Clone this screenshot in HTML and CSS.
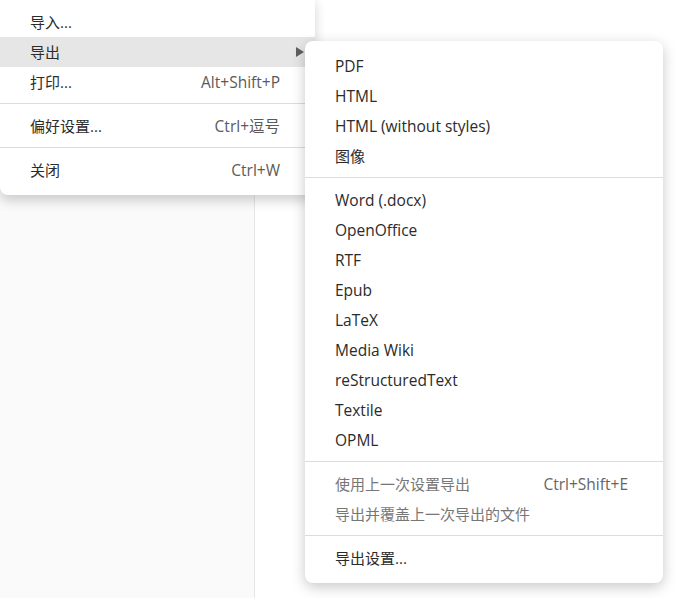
FILE: index.html
```html
<!DOCTYPE html>
<html lang="zh-CN">
<head>
<meta charset="utf-8">
<title>Export menu</title>
<link rel="stylesheet" href="styles.css">
</head>
<body>
<div class="app">
  <aside class="sidebar"></aside>
  <main class="editor"></main>
</div>

<div class="menu menu-main">
  <div class="item"><span class="label zh">导入...</span></div>
  <div class="item active"><span class="label zh">导出</span><span class="arrow"></span></div>
  <div class="item"><span class="label zh">打印...</span><span class="key">Alt+Shift+P</span></div>
  <div class="sep"></div>
  <div class="item"><span class="label zh">偏好设置...</span><span class="key">Ctrl+逗号</span></div>
  <div class="sep"></div>
  <div class="item"><span class="label zh">关闭</span><span class="key">Ctrl+W</span></div>
</div>

<div class="menu menu-sub">
  <div class="item"><span class="label">PDF</span></div>
  <div class="item"><span class="label">HTML</span></div>
  <div class="item"><span class="label">HTML (without styles)</span></div>
  <div class="item"><span class="label zh">图像</span></div>
  <div class="sep"></div>
  <div class="item"><span class="label">Word (.docx)</span></div>
  <div class="item"><span class="label">OpenOffice</span></div>
  <div class="item"><span class="label">RTF</span></div>
  <div class="item"><span class="label">Epub</span></div>
  <div class="item"><span class="label">LaTeX</span></div>
  <div class="item"><span class="label">Media Wiki</span></div>
  <div class="item"><span class="label">reStructuredText</span></div>
  <div class="item"><span class="label">Textile</span></div>
  <div class="item"><span class="label">OPML</span></div>
  <div class="sep"></div>
  <div class="item muted"><span class="label zh">使用上一次设置导出</span><span class="key">Ctrl+Shift+E</span></div>
  <div class="item muted"><span class="label zh">导出并覆盖上一次导出的文件</span></div>
  <div class="sep"></div>
  <div class="item"><span class="label zh">导出设置...</span></div>
</div>
</body>
</html>
```

FILE: styles.css
```css
* { box-sizing: border-box; }

html, body {
  margin: 0;
  padding: 0;
  height: 100%;
}

body {
  font-family: "Open Sans", "Noto Sans CJK SC", sans-serif;
  font-size: 15.5px;
  color: #2b2b2b;
  background: #fff;
  overflow: hidden;
}

.app {
  display: flex;
  height: 100vh;
}

.sidebar {
  width: 255px;
  flex: none;
  background: #fafafa;
  border-right: 1px solid #e6e6e6;
}

.editor {
  flex: 1;
  background: #fff;
}

.menu {
  position: absolute;
  background: #fff;
  padding: 10px 0;
  box-shadow: 0 4px 14px rgba(0, 0, 0, 0.22);
}

.menu-main {
  left: 0;
  top: -3px;
  width: 315px;
  border-radius: 0 0 8px 8px;
  box-shadow: 0 6px 12px rgba(0, 0, 0, 0.18);
}

.menu-sub {
  left: 305px;
  top: 41px;
  width: 358px;
  border-radius: 8px;
}

.item {
  display: flex;
  align-items: center;
  justify-content: space-between;
  height: 30px;
  padding: 0 35px 1px 30px;
  white-space: nowrap;
}

.label.zh {
  font-size: 15px;
}

.item.active {
  background: #e6e6e6;
  padding-right: 11px;
}

.key {
  color: #5a5a5a;
}

.item.muted .label {
  color: #777;
}

.item.muted .key {
  color: #666;
}

.arrow {
  width: 0;
  height: 0;
  border-top: 5px solid transparent;
  border-bottom: 5px solid transparent;
  border-left: 8px solid #606060;
}

.sep {
  height: 1px;
  background: #dcdcdc;
  margin: 6px 0 7px;
}
```
